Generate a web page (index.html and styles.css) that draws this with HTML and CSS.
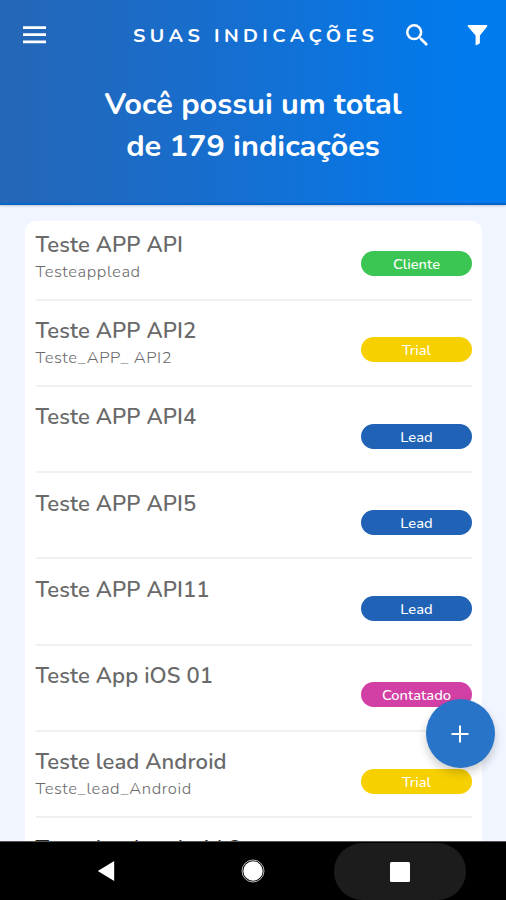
FILE: index.html
```html
<!DOCTYPE html>
<html lang="pt-BR">
<head><meta charset="utf-8"><title>Suas indicações</title><link rel="stylesheet" href="styles.css"></head>
<body>
<div class="app">
<header class="hero">
<div class="bar">
<svg class="menu" viewBox="0 0 23 18"><path d="M0 1.600h23M0 8.700h23M0 15.800h23"/></svg>
<h1>SUAS INDICAÇÕES</h1>
<svg class="search" viewBox="3 3 17.500 17.500"><path d="M15.500 14h-.79l-.28-.27A6.470 6.470 0 0 0 16 9.500 6.500 6.500 0 1 0 9.500 16c1.610 0 3.090-.59 4.230-1.570l.27.28v.79l5 4.990L20.490 19zm-6 0a4.500 4.500 0 1 1 0-9 4.500 4.500 0 0 1 0 9z"/></svg>
<svg class="filter" viewBox="0 0 21 22"><path d="M.8 0h19.400q1 .5.400 1.500L13 11v8.200l-3.600 2q-.9 0-.9-1V11L.4 1.500Q-.2.500.8 0z"/></svg>
</div>
<p class="total"><span>Você possui um total</span><span>de 179 indicações</span></p>
</header>
<main class="content">
<div class="card">
<div class="row"><div class="info"><h2>Teste APP API</h2><p>Testeapplead</p></div><span class="pill client">Cliente</span></div>
<div class="row"><div class="info"><h2>Teste APP API2</h2><p>Teste_APP_ API2</p></div><span class="pill trial">Trial</span></div>
<div class="row"><div class="info"><h2>Teste APP API4</h2></div><span class="pill lead">Lead</span></div>
<div class="row"><div class="info"><h2>Teste APP API5</h2></div><span class="pill lead">Lead</span></div>
<div class="row"><div class="info"><h2>Teste APP API11</h2></div><span class="pill lead">Lead</span></div>
<div class="row"><div class="info"><h2>Teste App iOS 01</h2></div><span class="pill contacted">Contatado</span></div>
<div class="row"><div class="info"><h2>Teste lead Android</h2><p>Teste_lead_Android</p></div><span class="pill trial">Trial</span></div>
<div class="row last"><div class="info"><h2>Teste lead android 2</h2></div></div>
</div>
</main>
<button class="fab" aria-label="Adicionar"><svg viewBox="0 0 18 18"><path d="M9 .5v17M.5 9h17"/></svg></button>
<nav class="nav">
<div><svg viewBox="0 0 20 22"><path d="M19 0v22L1 11z"/></svg></div>
<div><svg class="home" viewBox="0 0 24 24"><circle class="ring" cx="12" cy="12" r="11"/><circle cx="12" cy="12" r="9.700"/></svg></div>
<div class="recent"><svg viewBox="0 0 20 20"><rect width="20" height="20" rx="1.500"/></svg></div>
</nav>
</div>
</body></html>
```
FILE: styles.css
```css
*{box-sizing:border-box}
body{margin:0;font-family:Nunito,Lato,"Open Sans",sans-serif;background:#f0f5ff}
h1,h2,p{margin:0}
.app{position:relative;width:506px;height:900px;overflow:hidden;display:flex;flex-direction:column}
.hero{flex:0 0 205px;background:linear-gradient(90deg,#2566b7,#156fd1 48%,#007bef 94%);color:#fff;border-bottom:2px solid #0765c8;box-shadow:0 1px 2px #0003}
.bar{height:70px;display:flex;align-items:center;padding-left:23px}
.menu{width:23px;height:18px;stroke:#fff;stroke-width:2.800}
h1{margin-left:86.500px;width:246px;padding-top:2px;font-size:17.500px;line-height:24px;font-weight:700;letter-spacing:3.950px;white-space:nowrap;transform:scaleX(1.12);transform-origin:left}
.search{width:22px;height:22px;margin-left:27.500px;fill:#fff}
.filter{width:21px;height:21px;margin-left:38.500px;fill:#fff}
.total{margin-top:13.400px;text-align:center;font-size:30.700px;line-height:42px;font-weight:700}
.total span{display:block}
.content{flex:1;min-height:0;padding:16px 24px 0 25px;overflow:hidden}
.card{background:#fff;border-radius:11px;padding:0 10px 0 11px}
.row{height:86.250px;padding-top:16.500px;display:flex;justify-content:space-between;border-bottom:2px solid #f0f0f0}
.row:first-child{height:79.500px;padding-top:9.750px}
.info{color:#6a6a6a;margin-left:-.5px}
.last .info{color:#222}
.info h2{font-size:22px;line-height:28px;font-weight:600;letter-spacing:.1px}
.info p{font-size:16.500px;line-height:25.500px;font-weight:300;letter-spacing:.58px}
.pill{width:111px;height:25px;border-radius:13px;margin-top:20.400px;color:#fff;text-align:center;font-size:14.700px;line-height:26px;font-weight:500}
.client{background:#3bc653}
.trial{background:#f7d000}
.lead{background:#2063b6}
.contacted{background:#d340a5}
.nav{flex:0 0 59px;background:#000;border-top:1px solid #555;display:flex;padding-left:39.500px}
.nav div{width:132px;margin-right:15px;display:flex;align-items:center;justify-content:center}
.nav svg{width:20px;height:20px;fill:#fff}
.nav .home{width:24px;height:24px}
.ring{fill:none;stroke:#bbb;stroke-width:1}
.nav .recent{background:#1c1c1c;border-radius:29px;margin:1px 0 0}
.fab{position:absolute;left:425.500px;top:699px;width:69px;height:69px;padding:0;border:0;border-radius:50%;background:#2874c8;box-shadow:0 5px 10px #0003;display:grid;place-items:center}
.fab svg{width:18px;height:18px;stroke:#fff;stroke-width:2}
```
